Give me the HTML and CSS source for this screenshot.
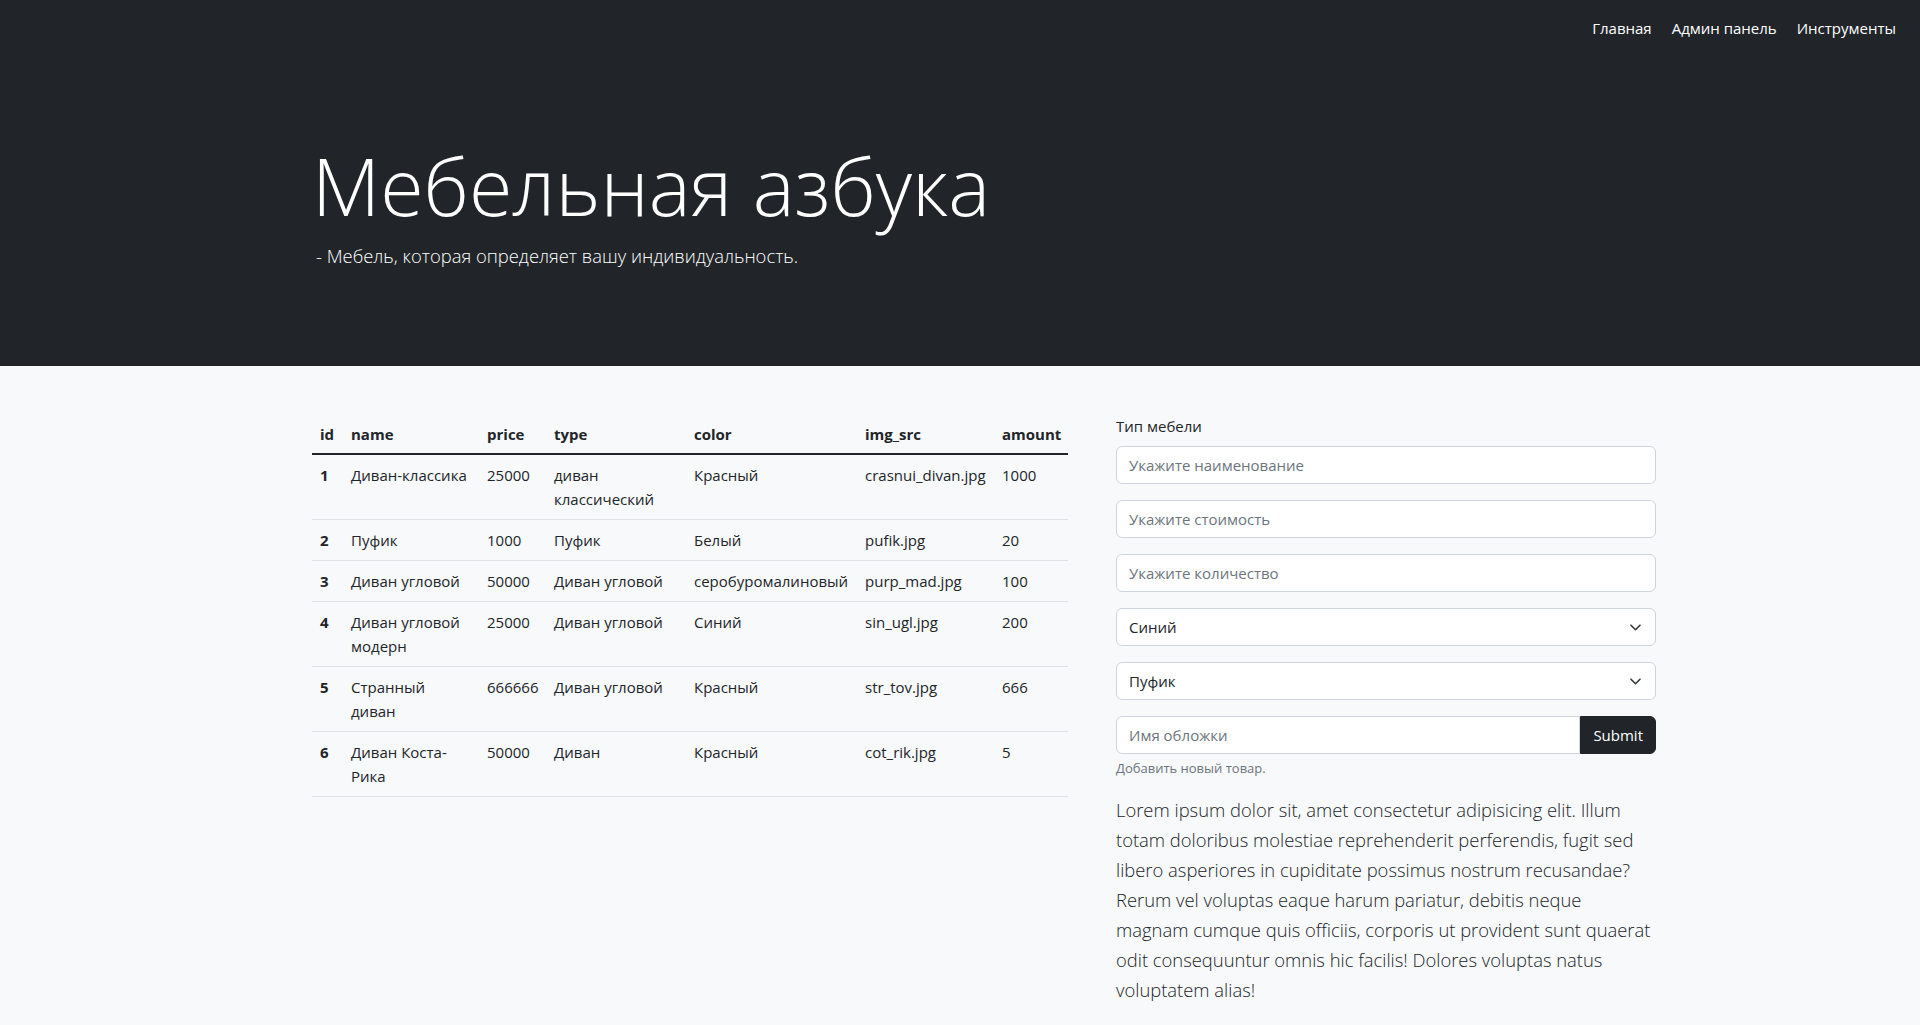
FILE: index.html
```html
<!DOCTYPE html>
<html lang="ru">
<head>
<meta charset="utf-8">
<title>Мебельная азбука</title>
<link rel="stylesheet" href="styles.css">
</head>
<body>
<header class="hero">
  <nav class="topnav">
    <a href="#">Главная</a>
    <a href="#">Админ панель</a>
    <a href="#">Инструменты</a>
  </nav>
  <div class="hero-inner">
    <h1 class="display">Мебельная азбука</h1>
    <p class="hero-lead">- Мебель, которая определяет вашу индивидуальность.</p>
  </div>
</header>
<main class="content">
  <div class="layout">
    <table class="items">
      <colgroup>
        <col class="c-id"><col class="c-name"><col class="c-price"><col class="c-type"><col class="c-color"><col class="c-img"><col class="c-amount">
      </colgroup>
      <thead>
        <tr><th>id</th><th>name</th><th>price</th><th>type</th><th>color</th><th>img_src</th><th>amount</th></tr>
      </thead>
      <tbody>
        <tr><th>1</th><td>Диван-классика</td><td>25000</td><td>диван классический</td><td>Красный</td><td>crasnui_divan.jpg</td><td>1000</td></tr>
        <tr><th>2</th><td>Пуфик</td><td>1000</td><td>Пуфик</td><td>Белый</td><td>pufik.jpg</td><td>20</td></tr>
        <tr><th>3</th><td>Диван угловой</td><td>50000</td><td>Диван угловой</td><td>серобуромалиновый</td><td>purp_mad.jpg</td><td>100</td></tr>
        <tr><th>4</th><td>Диван угловой модерн</td><td>25000</td><td>Диван угловой</td><td>Синий</td><td>sin_ugl.jpg</td><td>200</td></tr>
        <tr><th>5</th><td>Странный диван</td><td>666666</td><td>Диван угловой</td><td>Красный</td><td>str_tov.jpg</td><td>666</td></tr>
        <tr><th>6</th><td>Диван Коста-Рика</td><td>50000</td><td>Диван</td><td>Красный</td><td>cot_rik.jpg</td><td>5</td></tr>
      </tbody>
    </table>
    <div class="side">
      <form class="add-form">
        <label class="form-label">Тип мебели</label>
        <input class="form-control" type="text" placeholder="Укажите наименование">
        <input class="form-control" type="text" placeholder="Укажите стоимость">
        <input class="form-control" type="text" placeholder="Укажите количество">
        <div class="form-select">
          <span>Синий</span>
          <svg class="chev" viewBox="0 0 11 7" width="11" height="7"><path d="M1 1.2l4.5 4.5L10 1.2" fill="none" stroke="#343a40" stroke-width="1.6" stroke-linecap="round" stroke-linejoin="round"/></svg>
        </div>
        <div class="form-select">
          <span>Пуфик</span>
          <svg class="chev" viewBox="0 0 11 7" width="11" height="7"><path d="M1 1.2l4.5 4.5L10 1.2" fill="none" stroke="#343a40" stroke-width="1.6" stroke-linecap="round" stroke-linejoin="round"/></svg>
        </div>
        <div class="input-group">
          <input class="form-control group-input" type="text" placeholder="Имя обложки">
          <button class="btn-dark" type="button">Submit</button>
        </div>
        <div class="form-text">Добавить новый товар.</div>
      </form>
      <p class="side-lead">Lorem ipsum dolor sit, amet consectetur adipisicing elit. Illum totam doloribus molestiae reprehenderit perferendis, fugit sed libero asperiores in cupiditate possimus nostrum recusandae? Rerum vel voluptas eaque harum pariatur, debitis neque magnam cumque quis officiis, corporis ut provident sunt quaerat odit consequuntur omnis hic facilis! Dolores voluptas natus voluptatem alias!</p>
    </div>
  </div>
</main>
</body>
</html>
```

FILE: styles.css
```css
* { box-sizing: border-box; }

html, body {
  margin: 0;
  padding: 0;
  background: #f8f9fa;
}

body {
  font-family: "Open Sans", "Noto Sans", sans-serif;
  font-size: 15px;
  line-height: 24px;
  color: #212529;
}

.hero {
  background: #212529;
  height: 366px;
  display: flex;
  flex-direction: column;
}

.topnav {
  display: flex;
  justify-content: flex-end;
  gap: 4px;
  padding: 8px 16px 7px;
}

.topnav a {
  color: #fff;
  text-decoration: none;
  font-size: 15px;
  line-height: 24px;
  padding: 8px;
}

.hero-inner {
  padding: 84px 0 0 312px;
  color: #fff;
}

.display {
  margin: 0 0 8px;
  font-size: 79px;
  font-weight: 300;
  line-height: 1.2;
}

.hero-lead {
  margin: 0;
  padding-left: 4px;
  font-size: 18.4px;
  font-weight: 300;
  line-height: 1.5;
}

.content {
  padding: 48px 0 0 312px;
}

.layout {
  display: flex;
  align-items: flex-start;
  gap: 48px;
}

.items {
  width: 756px;
  table-layout: fixed;
  border-collapse: collapse;
}

.c-id { width: 31px; }
.c-name { width: 136px; }
.c-price { width: 67px; }
.c-type { width: 140px; }
.c-color { width: 171px; }
.c-img { width: 137px; }
.c-amount { width: 74px; }

.items th,
.items td {
  padding: 8px;
  text-align: left;
  vertical-align: top;
  border-bottom: 1px solid #dee2e6;
  font-size: 15px;
  line-height: 24px;
}

.items th { font-weight: 700; }

.items thead th {
  padding-bottom: 7px;
  border-bottom: 2px solid #212529;
}

.side {
  width: 540px;
}

.add-form {
  display: flex;
  flex-direction: column;
}

.form-label {
  display: block;
  margin-bottom: 8px;
  font-size: 15px;
  line-height: 24px;
}

.form-control {
  display: block;
  width: 100%;
  height: 38px;
  margin: 0 0 16px;
  padding: 6px 12px;
  font-family: inherit;
  font-size: 15px;
  line-height: 24px;
  color: #212529;
  background: #fff;
  border: 1px solid #ced4da;
  border-radius: 6px;
  outline: none;
}

.form-control::placeholder {
  color: #6c757d;
  opacity: 1;
}

.form-select {
  display: flex;
  align-items: center;
  justify-content: space-between;
  height: 38px;
  margin-bottom: 16px;
  padding: 6px 14px 6px 12px;
  font-size: 15px;
  line-height: 24px;
  background: #fff;
  border: 1px solid #ced4da;
  border-radius: 6px;
}

.chev {
  display: block;
  width: 11px;
  height: 7px;
}

.input-group {
  display: flex;
  height: 38px;
}

.group-input {
  flex: 1;
  margin: 0;
  border-radius: 6px 0 0 6px;
}

.btn-dark {
  height: 38px;
  padding: 6px 12px;
  font-family: inherit;
  font-size: 15px;
  line-height: 24px;
  color: #fff;
  background: #212529;
  border: 1px solid #212529;
  border-radius: 0 6px 6px 0;
}

.form-text {
  margin: 4px 0 16px;
  font-size: 13px;
  line-height: 21px;
  color: #6c757d;
}

.side-lead {
  margin: 0;
  font-size: 18.4px;
  font-weight: 300;
  line-height: 30px;
}
```
